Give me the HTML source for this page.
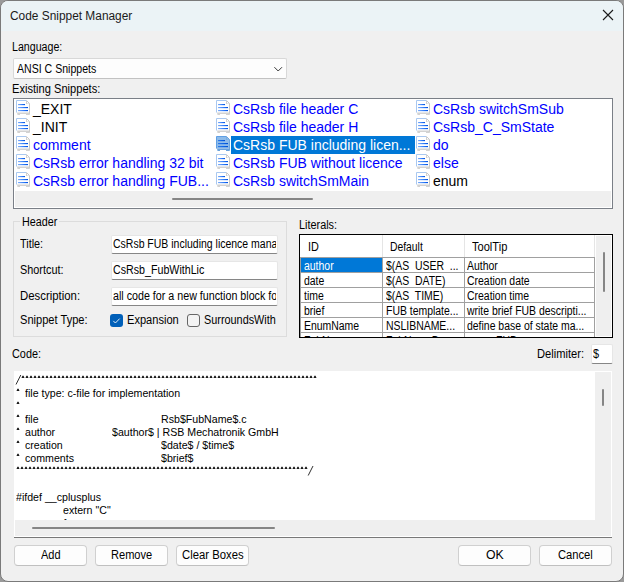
<!DOCTYPE html>
<html><head><meta charset="utf-8">
<style>
html,body{margin:0;padding:0;width:624px;height:582px;overflow:hidden;background:#9a9a9a;}
body{font-family:"Liberation Sans",sans-serif;font-size:12px;color:#000;}
#win{position:absolute;left:0;top:0;width:622px;height:580px;border:1px solid #7a7a7a;border-radius:8px;background:#f0f0f0;overflow:hidden;}
#tb{position:absolute;left:0;top:0;width:622px;height:30px;background:#ebf3f6;}
.a{position:absolute;}
.t{position:absolute;white-space:pre;transform-origin:0 0;}
.box{position:absolute;box-sizing:border-box;}
.btn{position:absolute;box-sizing:border-box;height:21px;top:545px;border:1px solid #d0d0d0;border-bottom-color:#c0c0c0;border-radius:4px;background:#fdfdfd;}
</style></head><body>
<div id="win"><div id="tb"></div></div>
<svg class="a" style="left:602px;top:9px" width="12" height="12" viewBox="0 0 12 12"><path d="M1 1L11 11M11 1L1 11" stroke="#1a1a1a" stroke-width="1.1" fill="none"/></svg>

<div class="box" style="left:13px;top:58px;width:274px;height:21px;background:#fdfdfd;border:1px solid #d8d8d8;border-bottom-color:#c2c2c2;border-radius:2px;"></div>
<svg class="a" style="left:273px;top:65px" width="11" height="8" viewBox="0 0 11 8"><path d="M1.4 2.2L5.2 6L9 2.2" stroke="#383838" stroke-width="1" fill="none"/></svg>

<div class="box" style="left:13px;top:98px;width:600px;height:111px;border:1px solid #7a7f87;background:#fff;"></div>
<div class="a" style="left:15px;top:191px;width:596px;height:16px;background:#efefef;"></div>
<div class="a" style="left:172px;top:198px;width:141px;height:2px;background:#858585;border-radius:1px;"></div>
<div class="a" style="left:16px;top:100px;line-height:0"><svg width="14" height="16" viewBox="0 0 14 16"><defs><linearGradient id="lg" x1="0" x2="1"><stop offset="0" stop-color="#82b0fa"/><stop offset="0.6" stop-color="#2a78f8"/><stop offset="1" stop-color="#0050e0"/></linearGradient></defs>
<path d="M0.5 0.5H10.5L13.5 3.5V12.5H0.5Z" fill="#fff"/>
<path d="M0.5 12.5V0.5H10.5" stroke="#a9c8f0" fill="none"/>
<path d="M10.5 0.5L13.5 3.5V14.5" stroke="#c8c8c8" fill="none"/>
<path d="M10 1H11V3.5H13.5V4H10Z" fill="#d0d0d0"/>
<rect x="2" y="4" width="7" height="1.15" fill="url(#lg)"/>
<rect x="2" y="7" width="10" height="1.15" fill="url(#lg)"/>
<rect x="2" y="10" width="10" height="1.15" fill="url(#lg)"/>
<path d="M1 12.5H13.5V15H10V14H4V15H1.5Z" fill="#d2d2d2"/>
</svg></div><div class="t" style="left:33px;top:102px;font-size:14px;line-height:14px;color:#000;">_EXIT</div><div class="a" style="left:16px;top:118px;line-height:0"><svg width="14" height="16" viewBox="0 0 14 16"><defs><linearGradient id="lg" x1="0" x2="1"><stop offset="0" stop-color="#82b0fa"/><stop offset="0.6" stop-color="#2a78f8"/><stop offset="1" stop-color="#0050e0"/></linearGradient></defs>
<path d="M0.5 0.5H10.5L13.5 3.5V12.5H0.5Z" fill="#fff"/>
<path d="M0.5 12.5V0.5H10.5" stroke="#a9c8f0" fill="none"/>
<path d="M10.5 0.5L13.5 3.5V14.5" stroke="#c8c8c8" fill="none"/>
<path d="M10 1H11V3.5H13.5V4H10Z" fill="#d0d0d0"/>
<rect x="2" y="4" width="7" height="1.15" fill="url(#lg)"/>
<rect x="2" y="7" width="10" height="1.15" fill="url(#lg)"/>
<rect x="2" y="10" width="10" height="1.15" fill="url(#lg)"/>
<path d="M1 12.5H13.5V15H10V14H4V15H1.5Z" fill="#d2d2d2"/>
</svg></div><div class="t" style="left:33px;top:120px;font-size:14px;line-height:14px;color:#000;">_INIT</div><div class="a" style="left:16px;top:136px;line-height:0"><svg width="14" height="16" viewBox="0 0 14 16"><defs><linearGradient id="lg" x1="0" x2="1"><stop offset="0" stop-color="#82b0fa"/><stop offset="0.6" stop-color="#2a78f8"/><stop offset="1" stop-color="#0050e0"/></linearGradient></defs>
<path d="M0.5 0.5H10.5L13.5 3.5V12.5H0.5Z" fill="#fff"/>
<path d="M0.5 12.5V0.5H10.5" stroke="#a9c8f0" fill="none"/>
<path d="M10.5 0.5L13.5 3.5V14.5" stroke="#c8c8c8" fill="none"/>
<path d="M10 1H11V3.5H13.5V4H10Z" fill="#d0d0d0"/>
<rect x="2" y="4" width="7" height="1.15" fill="url(#lg)"/>
<rect x="2" y="7" width="10" height="1.15" fill="url(#lg)"/>
<rect x="2" y="10" width="10" height="1.15" fill="url(#lg)"/>
<path d="M1 12.5H13.5V15H10V14H4V15H1.5Z" fill="#d2d2d2"/>
</svg></div><div class="t" style="left:33px;top:138px;font-size:14px;line-height:14px;color:#0000ff;">comment</div><div class="a" style="left:16px;top:154px;line-height:0"><svg width="14" height="16" viewBox="0 0 14 16"><defs><linearGradient id="lg" x1="0" x2="1"><stop offset="0" stop-color="#82b0fa"/><stop offset="0.6" stop-color="#2a78f8"/><stop offset="1" stop-color="#0050e0"/></linearGradient></defs>
<path d="M0.5 0.5H10.5L13.5 3.5V12.5H0.5Z" fill="#fff"/>
<path d="M0.5 12.5V0.5H10.5" stroke="#a9c8f0" fill="none"/>
<path d="M10.5 0.5L13.5 3.5V14.5" stroke="#c8c8c8" fill="none"/>
<path d="M10 1H11V3.5H13.5V4H10Z" fill="#d0d0d0"/>
<rect x="2" y="4" width="7" height="1.15" fill="url(#lg)"/>
<rect x="2" y="7" width="10" height="1.15" fill="url(#lg)"/>
<rect x="2" y="10" width="10" height="1.15" fill="url(#lg)"/>
<path d="M1 12.5H13.5V15H10V14H4V15H1.5Z" fill="#d2d2d2"/>
</svg></div><div class="t" style="left:33px;top:156px;font-size:14px;line-height:14px;color:#0000ff;">CsRsb error handling 32 bit</div><div class="a" style="left:16px;top:172px;line-height:0"><svg width="14" height="16" viewBox="0 0 14 16"><defs><linearGradient id="lg" x1="0" x2="1"><stop offset="0" stop-color="#82b0fa"/><stop offset="0.6" stop-color="#2a78f8"/><stop offset="1" stop-color="#0050e0"/></linearGradient></defs>
<path d="M0.5 0.5H10.5L13.5 3.5V12.5H0.5Z" fill="#fff"/>
<path d="M0.5 12.5V0.5H10.5" stroke="#a9c8f0" fill="none"/>
<path d="M10.5 0.5L13.5 3.5V14.5" stroke="#c8c8c8" fill="none"/>
<path d="M10 1H11V3.5H13.5V4H10Z" fill="#d0d0d0"/>
<rect x="2" y="4" width="7" height="1.15" fill="url(#lg)"/>
<rect x="2" y="7" width="10" height="1.15" fill="url(#lg)"/>
<rect x="2" y="10" width="10" height="1.15" fill="url(#lg)"/>
<path d="M1 12.5H13.5V15H10V14H4V15H1.5Z" fill="#d2d2d2"/>
</svg></div><div class="t" style="left:33px;top:174px;font-size:14px;line-height:14px;color:#0000ff;">CsRsb error handling FUB...</div><div class="a" style="left:216px;top:100px;line-height:0"><svg width="14" height="16" viewBox="0 0 14 16"><defs><linearGradient id="lg" x1="0" x2="1"><stop offset="0" stop-color="#82b0fa"/><stop offset="0.6" stop-color="#2a78f8"/><stop offset="1" stop-color="#0050e0"/></linearGradient></defs>
<path d="M0.5 0.5H10.5L13.5 3.5V12.5H0.5Z" fill="#fff"/>
<path d="M0.5 12.5V0.5H10.5" stroke="#a9c8f0" fill="none"/>
<path d="M10.5 0.5L13.5 3.5V14.5" stroke="#c8c8c8" fill="none"/>
<path d="M10 1H11V3.5H13.5V4H10Z" fill="#d0d0d0"/>
<rect x="2" y="4" width="7" height="1.15" fill="url(#lg)"/>
<rect x="2" y="7" width="10" height="1.15" fill="url(#lg)"/>
<rect x="2" y="10" width="10" height="1.15" fill="url(#lg)"/>
<path d="M1 12.5H13.5V15H10V14H4V15H1.5Z" fill="#d2d2d2"/>
</svg></div><div class="t" style="left:233px;top:102px;font-size:14px;line-height:14px;color:#0000ff;">CsRsb file header C</div><div class="a" style="left:216px;top:118px;line-height:0"><svg width="14" height="16" viewBox="0 0 14 16"><defs><linearGradient id="lg" x1="0" x2="1"><stop offset="0" stop-color="#82b0fa"/><stop offset="0.6" stop-color="#2a78f8"/><stop offset="1" stop-color="#0050e0"/></linearGradient></defs>
<path d="M0.5 0.5H10.5L13.5 3.5V12.5H0.5Z" fill="#fff"/>
<path d="M0.5 12.5V0.5H10.5" stroke="#a9c8f0" fill="none"/>
<path d="M10.5 0.5L13.5 3.5V14.5" stroke="#c8c8c8" fill="none"/>
<path d="M10 1H11V3.5H13.5V4H10Z" fill="#d0d0d0"/>
<rect x="2" y="4" width="7" height="1.15" fill="url(#lg)"/>
<rect x="2" y="7" width="10" height="1.15" fill="url(#lg)"/>
<rect x="2" y="10" width="10" height="1.15" fill="url(#lg)"/>
<path d="M1 12.5H13.5V15H10V14H4V15H1.5Z" fill="#d2d2d2"/>
</svg></div><div class="t" style="left:233px;top:120px;font-size:14px;line-height:14px;color:#0000ff;">CsRsb file header H</div><div class="a" style="left:231px;top:136px;width:184px;height:18px;background:#0078d7;"></div><div class="a" style="left:216px;top:136px;line-height:0"><svg width="14" height="16" viewBox="0 0 14 16"><defs><linearGradient id="lgs" x1="0" x2="1"><stop offset="0" stop-color="#2f7ae6"/><stop offset="0.6" stop-color="#0a62e6"/><stop offset="1" stop-color="#0050d0"/></linearGradient></defs>
<path d="M0.5 0.5H10.5L13.5 3.5V12.5H0.5Z" fill="#8dbbea"/>
<path d="M0.5 12.5V0.5H10.5" stroke="#5f9fe4" fill="none"/>
<path d="M10.5 0.5L13.5 3.5V14.5" stroke="#6ea4dc" fill="none"/>
<path d="M10 1H11V3.5H13.5V4H10Z" fill="#78aee2"/>
<rect x="2" y="4" width="7" height="1.15" fill="url(#lgs)"/>
<rect x="2" y="7" width="10" height="1.15" fill="url(#lgs)"/>
<rect x="2" y="10" width="10" height="1.15" fill="url(#lgs)"/>
<path d="M1 12.5H13.5V15H10V14H4V15H1.5Z" fill="#6aa2dc"/>
</svg></div><div class="t" style="left:233px;top:138px;font-size:14px;line-height:14px;color:#fff;">CsRsb FUB including licen...</div><div class="a" style="left:216px;top:154px;line-height:0"><svg width="14" height="16" viewBox="0 0 14 16"><defs><linearGradient id="lg" x1="0" x2="1"><stop offset="0" stop-color="#82b0fa"/><stop offset="0.6" stop-color="#2a78f8"/><stop offset="1" stop-color="#0050e0"/></linearGradient></defs>
<path d="M0.5 0.5H10.5L13.5 3.5V12.5H0.5Z" fill="#fff"/>
<path d="M0.5 12.5V0.5H10.5" stroke="#a9c8f0" fill="none"/>
<path d="M10.5 0.5L13.5 3.5V14.5" stroke="#c8c8c8" fill="none"/>
<path d="M10 1H11V3.5H13.5V4H10Z" fill="#d0d0d0"/>
<rect x="2" y="4" width="7" height="1.15" fill="url(#lg)"/>
<rect x="2" y="7" width="10" height="1.15" fill="url(#lg)"/>
<rect x="2" y="10" width="10" height="1.15" fill="url(#lg)"/>
<path d="M1 12.5H13.5V15H10V14H4V15H1.5Z" fill="#d2d2d2"/>
</svg></div><div class="t" style="left:233px;top:156px;font-size:14px;line-height:14px;color:#0000ff;">CsRsb FUB without licence</div><div class="a" style="left:216px;top:172px;line-height:0"><svg width="14" height="16" viewBox="0 0 14 16"><defs><linearGradient id="lg" x1="0" x2="1"><stop offset="0" stop-color="#82b0fa"/><stop offset="0.6" stop-color="#2a78f8"/><stop offset="1" stop-color="#0050e0"/></linearGradient></defs>
<path d="M0.5 0.5H10.5L13.5 3.5V12.5H0.5Z" fill="#fff"/>
<path d="M0.5 12.5V0.5H10.5" stroke="#a9c8f0" fill="none"/>
<path d="M10.5 0.5L13.5 3.5V14.5" stroke="#c8c8c8" fill="none"/>
<path d="M10 1H11V3.5H13.5V4H10Z" fill="#d0d0d0"/>
<rect x="2" y="4" width="7" height="1.15" fill="url(#lg)"/>
<rect x="2" y="7" width="10" height="1.15" fill="url(#lg)"/>
<rect x="2" y="10" width="10" height="1.15" fill="url(#lg)"/>
<path d="M1 12.5H13.5V15H10V14H4V15H1.5Z" fill="#d2d2d2"/>
</svg></div><div class="t" style="left:233px;top:174px;font-size:14px;line-height:14px;color:#0000ff;">CsRsb switchSmMain</div><div class="a" style="left:416px;top:100px;line-height:0"><svg width="14" height="16" viewBox="0 0 14 16"><defs><linearGradient id="lg" x1="0" x2="1"><stop offset="0" stop-color="#82b0fa"/><stop offset="0.6" stop-color="#2a78f8"/><stop offset="1" stop-color="#0050e0"/></linearGradient></defs>
<path d="M0.5 0.5H10.5L13.5 3.5V12.5H0.5Z" fill="#fff"/>
<path d="M0.5 12.5V0.5H10.5" stroke="#a9c8f0" fill="none"/>
<path d="M10.5 0.5L13.5 3.5V14.5" stroke="#c8c8c8" fill="none"/>
<path d="M10 1H11V3.5H13.5V4H10Z" fill="#d0d0d0"/>
<rect x="2" y="4" width="7" height="1.15" fill="url(#lg)"/>
<rect x="2" y="7" width="10" height="1.15" fill="url(#lg)"/>
<rect x="2" y="10" width="10" height="1.15" fill="url(#lg)"/>
<path d="M1 12.5H13.5V15H10V14H4V15H1.5Z" fill="#d2d2d2"/>
</svg></div><div class="t" style="left:433px;top:102px;font-size:14px;line-height:14px;color:#0000ff;">CsRsb switchSmSub</div><div class="a" style="left:416px;top:118px;line-height:0"><svg width="14" height="16" viewBox="0 0 14 16"><defs><linearGradient id="lg" x1="0" x2="1"><stop offset="0" stop-color="#82b0fa"/><stop offset="0.6" stop-color="#2a78f8"/><stop offset="1" stop-color="#0050e0"/></linearGradient></defs>
<path d="M0.5 0.5H10.5L13.5 3.5V12.5H0.5Z" fill="#fff"/>
<path d="M0.5 12.5V0.5H10.5" stroke="#a9c8f0" fill="none"/>
<path d="M10.5 0.5L13.5 3.5V14.5" stroke="#c8c8c8" fill="none"/>
<path d="M10 1H11V3.5H13.5V4H10Z" fill="#d0d0d0"/>
<rect x="2" y="4" width="7" height="1.15" fill="url(#lg)"/>
<rect x="2" y="7" width="10" height="1.15" fill="url(#lg)"/>
<rect x="2" y="10" width="10" height="1.15" fill="url(#lg)"/>
<path d="M1 12.5H13.5V15H10V14H4V15H1.5Z" fill="#d2d2d2"/>
</svg></div><div class="t" style="left:433px;top:120px;font-size:14px;line-height:14px;color:#0000ff;">CsRsb_C_SmState</div><div class="a" style="left:416px;top:136px;line-height:0"><svg width="14" height="16" viewBox="0 0 14 16"><defs><linearGradient id="lg" x1="0" x2="1"><stop offset="0" stop-color="#82b0fa"/><stop offset="0.6" stop-color="#2a78f8"/><stop offset="1" stop-color="#0050e0"/></linearGradient></defs>
<path d="M0.5 0.5H10.5L13.5 3.5V12.5H0.5Z" fill="#fff"/>
<path d="M0.5 12.5V0.5H10.5" stroke="#a9c8f0" fill="none"/>
<path d="M10.5 0.5L13.5 3.5V14.5" stroke="#c8c8c8" fill="none"/>
<path d="M10 1H11V3.5H13.5V4H10Z" fill="#d0d0d0"/>
<rect x="2" y="4" width="7" height="1.15" fill="url(#lg)"/>
<rect x="2" y="7" width="10" height="1.15" fill="url(#lg)"/>
<rect x="2" y="10" width="10" height="1.15" fill="url(#lg)"/>
<path d="M1 12.5H13.5V15H10V14H4V15H1.5Z" fill="#d2d2d2"/>
</svg></div><div class="t" style="left:433px;top:138px;font-size:14px;line-height:14px;color:#0000ff;">do</div><div class="a" style="left:416px;top:154px;line-height:0"><svg width="14" height="16" viewBox="0 0 14 16"><defs><linearGradient id="lg" x1="0" x2="1"><stop offset="0" stop-color="#82b0fa"/><stop offset="0.6" stop-color="#2a78f8"/><stop offset="1" stop-color="#0050e0"/></linearGradient></defs>
<path d="M0.5 0.5H10.5L13.5 3.5V12.5H0.5Z" fill="#fff"/>
<path d="M0.5 12.5V0.5H10.5" stroke="#a9c8f0" fill="none"/>
<path d="M10.5 0.5L13.5 3.5V14.5" stroke="#c8c8c8" fill="none"/>
<path d="M10 1H11V3.5H13.5V4H10Z" fill="#d0d0d0"/>
<rect x="2" y="4" width="7" height="1.15" fill="url(#lg)"/>
<rect x="2" y="7" width="10" height="1.15" fill="url(#lg)"/>
<rect x="2" y="10" width="10" height="1.15" fill="url(#lg)"/>
<path d="M1 12.5H13.5V15H10V14H4V15H1.5Z" fill="#d2d2d2"/>
</svg></div><div class="t" style="left:433px;top:156px;font-size:14px;line-height:14px;color:#0000ff;">else</div><div class="a" style="left:416px;top:172px;line-height:0"><svg width="14" height="16" viewBox="0 0 14 16"><defs><linearGradient id="lg" x1="0" x2="1"><stop offset="0" stop-color="#82b0fa"/><stop offset="0.6" stop-color="#2a78f8"/><stop offset="1" stop-color="#0050e0"/></linearGradient></defs>
<path d="M0.5 0.5H10.5L13.5 3.5V12.5H0.5Z" fill="#fff"/>
<path d="M0.5 12.5V0.5H10.5" stroke="#a9c8f0" fill="none"/>
<path d="M10.5 0.5L13.5 3.5V14.5" stroke="#c8c8c8" fill="none"/>
<path d="M10 1H11V3.5H13.5V4H10Z" fill="#d0d0d0"/>
<rect x="2" y="4" width="7" height="1.15" fill="url(#lg)"/>
<rect x="2" y="7" width="10" height="1.15" fill="url(#lg)"/>
<rect x="2" y="10" width="10" height="1.15" fill="url(#lg)"/>
<path d="M1 12.5H13.5V15H10V14H4V15H1.5Z" fill="#d2d2d2"/>
</svg></div><div class="t" style="left:433px;top:174px;font-size:14px;line-height:14px;color:#000;">enum</div>

<div class="box" style="left:13px;top:221px;width:274px;height:116px;border:1px solid #dcdcdc;"></div>
<div class="a" style="left:20px;top:215px;width:39px;height:12px;background:#f0f0f0;"></div>

<div class="box" style="left:111px;top:235px;width:167px;height:19px;background:#fff;border:1px solid #e6e6e6;border-bottom-color:#868686;border-radius:2px;"></div>
<div class="box" style="left:111px;top:261px;width:167px;height:19px;background:#fff;border:1px solid #e6e6e6;border-bottom-color:#868686;border-radius:2px;"></div>
<div class="box" style="left:111px;top:287px;width:167px;height:19px;background:#fff;border:1px solid #e6e6e6;border-bottom-color:#868686;border-radius:2px;"></div>

<div class="box" style="left:110px;top:314px;width:13px;height:13px;background:#005fb8;border-radius:3px;"></div>
<svg class="a" style="left:110px;top:314px" width="13" height="13" viewBox="0 0 13 13"><path d="M3.3 6.9L5.4 9L9.7 4.6" stroke="#f4f8fc" stroke-width="0.9" fill="none"/></svg>
<div class="box" style="left:187px;top:314px;width:13px;height:13px;background:#f3f3f3;border:1px solid #666;border-radius:3px;"></div>

<div class="box" style="left:299px;top:234px;width:314px;height:104px;border:1px solid #000;background:#fff;"></div>
<div class="a" style="left:382px;top:235px;width:1px;height:22px;background:#e5e5e5;"></div><div class="a" style="left:464px;top:235px;width:1px;height:22px;background:#e5e5e5;"></div><div class="a" style="left:594px;top:235px;width:1px;height:22px;background:#e5e5e5;"></div><div class="a" style="left:596px;top:236px;width:15px;height:100px;background:#efefef;"></div><div class="a" style="left:603px;top:252px;width:2px;height:40px;background:#858585;border-radius:1px;"></div><div class="a" style="left:300px;top:257px;width:295px;height:1px;background:#a0a0a0;"></div><div class="a" style="left:300px;top:272px;width:295px;height:1px;background:#a0a0a0;"></div><div class="a" style="left:300px;top:287px;width:295px;height:1px;background:#a0a0a0;"></div><div class="a" style="left:300px;top:302px;width:295px;height:1px;background:#a0a0a0;"></div><div class="a" style="left:300px;top:317px;width:295px;height:1px;background:#a0a0a0;"></div><div class="a" style="left:300px;top:332px;width:295px;height:1px;background:#a0a0a0;"></div><div class="a" style="left:300px;top:257px;width:1px;height:80px;background:#a0a0a0;"></div><div class="a" style="left:382px;top:257px;width:1px;height:80px;background:#a0a0a0;"></div><div class="a" style="left:464px;top:257px;width:1px;height:80px;background:#a0a0a0;"></div><div class="a" style="left:594px;top:257px;width:1px;height:80px;background:#a0a0a0;"></div><div class="a" style="left:301px;top:258px;width:81px;height:14px;background:#0078d7;"></div><div class="a" style="left:301px;top:258px;width:81px;height:79px;overflow:hidden;"><div class="t" style="left:2.50px;top:2px;font-size:12px;line-height:12px;color:#fff;transform:scaleX(0.87);">author</div></div><div class="a" style="left:383px;top:258px;width:81px;height:79px;overflow:hidden;"><div class="t" style="left:2.90px;top:2px;font-size:12px;line-height:12px;color:#000;transform:scaleX(0.87);">$(AS  USER  ...</div></div><div class="a" style="left:465px;top:258px;width:129px;height:79px;overflow:hidden;"><div class="t" style="left:2.10px;top:2px;font-size:12px;line-height:12px;color:#000;transform:scaleX(0.87);">Author</div></div><div class="a" style="left:301px;top:258px;width:81px;height:79px;overflow:hidden;"><div class="t" style="left:2.50px;top:17px;font-size:12px;line-height:12px;color:#000;transform:scaleX(0.87);">date</div></div><div class="a" style="left:383px;top:258px;width:81px;height:79px;overflow:hidden;"><div class="t" style="left:2.90px;top:17px;font-size:12px;line-height:12px;color:#000;transform:scaleX(0.87);">$(AS  DATE)</div></div><div class="a" style="left:465px;top:258px;width:129px;height:79px;overflow:hidden;"><div class="t" style="left:2.10px;top:17px;font-size:12px;line-height:12px;color:#000;transform:scaleX(0.87);">Creation date</div></div><div class="a" style="left:301px;top:258px;width:81px;height:79px;overflow:hidden;"><div class="t" style="left:2.50px;top:32px;font-size:12px;line-height:12px;color:#000;transform:scaleX(0.87);">time</div></div><div class="a" style="left:383px;top:258px;width:81px;height:79px;overflow:hidden;"><div class="t" style="left:2.90px;top:32px;font-size:12px;line-height:12px;color:#000;transform:scaleX(0.87);">$(AS  TIME)</div></div><div class="a" style="left:465px;top:258px;width:129px;height:79px;overflow:hidden;"><div class="t" style="left:2.10px;top:32px;font-size:12px;line-height:12px;color:#000;transform:scaleX(0.87);">Creation time</div></div><div class="a" style="left:301px;top:258px;width:81px;height:79px;overflow:hidden;"><div class="t" style="left:2.50px;top:47px;font-size:12px;line-height:12px;color:#000;transform:scaleX(0.87);">brief</div></div><div class="a" style="left:383px;top:258px;width:81px;height:79px;overflow:hidden;"><div class="t" style="left:2.90px;top:47px;font-size:12px;line-height:12px;color:#000;transform:scaleX(0.87);">FUB template...</div></div><div class="a" style="left:465px;top:258px;width:129px;height:79px;overflow:hidden;"><div class="t" style="left:2.10px;top:47px;font-size:12px;line-height:12px;color:#000;transform:scaleX(0.87);">write brief FUB descripti...</div></div><div class="a" style="left:301px;top:258px;width:81px;height:79px;overflow:hidden;"><div class="t" style="left:2.50px;top:62px;font-size:12px;line-height:12px;color:#000;transform:scaleX(0.87);">EnumName</div></div><div class="a" style="left:383px;top:258px;width:81px;height:79px;overflow:hidden;"><div class="t" style="left:2.90px;top:62px;font-size:12px;line-height:12px;color:#000;transform:scaleX(0.87);">NSLIBNAME...</div></div><div class="a" style="left:465px;top:258px;width:129px;height:79px;overflow:hidden;"><div class="t" style="left:2.10px;top:62px;font-size:12px;line-height:12px;color:#000;transform:scaleX(0.87);">define base of state ma...</div></div><div class="a" style="left:301px;top:258px;width:81px;height:79px;overflow:hidden;"><div class="t" style="left:2.50px;top:77px;font-size:12px;line-height:12px;color:#000;transform:scaleX(0.87);">FubName</div></div><div class="a" style="left:383px;top:258px;width:81px;height:79px;overflow:hidden;"><div class="t" style="left:2.90px;top:77px;font-size:12px;line-height:12px;color:#000;transform:scaleX(0.87);">FubNameDe...</div></div><div class="a" style="left:465px;top:258px;width:129px;height:79px;overflow:hidden;"><div class="t" style="left:2.10px;top:77px;font-size:12px;line-height:12px;color:#000;transform:scaleX(0.87);">name FUB</div></div>

<div class="box" style="left:591px;top:344px;width:22px;height:20px;background:#fff;border:1px solid #e6e6e6;border-bottom-color:#868686;border-radius:2px;"></div>

<div class="a" style="left:14px;top:371px;width:598px;height:166px;background:#fff;overflow:hidden;"><svg class="a" style="left:0;top:0" width="598" height="166"><path d="M2 13.5L6.800000000000001 4" stroke="#1a1a1a" stroke-width="0.9"/></svg><svg class="a" style="left:0;top:0" width="598" height="166" fill="#1a1a1a"><path d="M7.50 7.00L8.40 4.80L9.60 4.80L10.50 7.00Z"/><path d="M11.50 7.00L12.40 4.80L13.60 4.80L14.50 7.00Z"/><path d="M15.50 7.00L16.40 4.80L17.60 4.80L18.50 7.00Z"/><path d="M19.50 7.00L20.40 4.80L21.60 4.80L22.50 7.00Z"/><path d="M23.50 7.00L24.40 4.80L25.60 4.80L26.50 7.00Z"/><path d="M27.50 7.00L28.40 4.80L29.60 4.80L30.50 7.00Z"/><path d="M31.50 7.00L32.40 4.80L33.60 4.80L34.50 7.00Z"/><path d="M35.50 7.00L36.40 4.80L37.60 4.80L38.50 7.00Z"/><path d="M39.50 7.00L40.40 4.80L41.60 4.80L42.50 7.00Z"/><path d="M43.50 7.00L44.40 4.80L45.60 4.80L46.50 7.00Z"/><path d="M47.50 7.00L48.40 4.80L49.60 4.80L50.50 7.00Z"/><path d="M51.50 7.00L52.40 4.80L53.60 4.80L54.50 7.00Z"/><path d="M55.50 7.00L56.40 4.80L57.60 4.80L58.50 7.00Z"/><path d="M59.50 7.00L60.40 4.80L61.60 4.80L62.50 7.00Z"/><path d="M63.50 7.00L64.40 4.80L65.60 4.80L66.50 7.00Z"/><path d="M67.50 7.00L68.40 4.80L69.60 4.80L70.50 7.00Z"/><path d="M71.50 7.00L72.40 4.80L73.60 4.80L74.50 7.00Z"/><path d="M75.50 7.00L76.40 4.80L77.60 4.80L78.50 7.00Z"/><path d="M79.50 7.00L80.40 4.80L81.60 4.80L82.50 7.00Z"/><path d="M83.50 7.00L84.40 4.80L85.60 4.80L86.50 7.00Z"/><path d="M87.50 7.00L88.40 4.80L89.60 4.80L90.50 7.00Z"/><path d="M91.50 7.00L92.40 4.80L93.60 4.80L94.50 7.00Z"/><path d="M95.50 7.00L96.40 4.80L97.60 4.80L98.50 7.00Z"/><path d="M99.50 7.00L100.40 4.80L101.60 4.80L102.50 7.00Z"/><path d="M103.50 7.00L104.40 4.80L105.60 4.80L106.50 7.00Z"/><path d="M107.50 7.00L108.40 4.80L109.60 4.80L110.50 7.00Z"/><path d="M111.50 7.00L112.40 4.80L113.60 4.80L114.50 7.00Z"/><path d="M115.50 7.00L116.40 4.80L117.60 4.80L118.50 7.00Z"/><path d="M119.50 7.00L120.40 4.80L121.60 4.80L122.50 7.00Z"/><path d="M123.50 7.00L124.40 4.80L125.60 4.80L126.50 7.00Z"/><path d="M127.50 7.00L128.40 4.80L129.60 4.80L130.50 7.00Z"/><path d="M131.50 7.00L132.40 4.80L133.60 4.80L134.50 7.00Z"/><path d="M135.50 7.00L136.40 4.80L137.60 4.80L138.50 7.00Z"/><path d="M139.50 7.00L140.40 4.80L141.60 4.80L142.50 7.00Z"/><path d="M143.50 7.00L144.40 4.80L145.60 4.80L146.50 7.00Z"/><path d="M147.50 7.00L148.40 4.80L149.60 4.80L150.50 7.00Z"/><path d="M151.50 7.00L152.40 4.80L153.60 4.80L154.50 7.00Z"/><path d="M155.50 7.00L156.40 4.80L157.60 4.80L158.50 7.00Z"/><path d="M159.50 7.00L160.40 4.80L161.60 4.80L162.50 7.00Z"/><path d="M163.50 7.00L164.40 4.80L165.60 4.80L166.50 7.00Z"/><path d="M167.50 7.00L168.40 4.80L169.60 4.80L170.50 7.00Z"/><path d="M171.50 7.00L172.40 4.80L173.60 4.80L174.50 7.00Z"/><path d="M175.50 7.00L176.40 4.80L177.60 4.80L178.50 7.00Z"/><path d="M179.50 7.00L180.40 4.80L181.60 4.80L182.50 7.00Z"/><path d="M183.50 7.00L184.40 4.80L185.60 4.80L186.50 7.00Z"/><path d="M187.50 7.00L188.40 4.80L189.60 4.80L190.50 7.00Z"/><path d="M191.50 7.00L192.40 4.80L193.60 4.80L194.50 7.00Z"/><path d="M195.50 7.00L196.40 4.80L197.60 4.80L198.50 7.00Z"/><path d="M199.50 7.00L200.40 4.80L201.60 4.80L202.50 7.00Z"/><path d="M203.50 7.00L204.40 4.80L205.60 4.80L206.50 7.00Z"/><path d="M207.50 7.00L208.40 4.80L209.60 4.80L210.50 7.00Z"/><path d="M211.50 7.00L212.40 4.80L213.60 4.80L214.50 7.00Z"/><path d="M215.50 7.00L216.40 4.80L217.60 4.80L218.50 7.00Z"/><path d="M219.50 7.00L220.40 4.80L221.60 4.80L222.50 7.00Z"/><path d="M223.50 7.00L224.40 4.80L225.60 4.80L226.50 7.00Z"/><path d="M227.50 7.00L228.40 4.80L229.60 4.80L230.50 7.00Z"/><path d="M231.50 7.00L232.40 4.80L233.60 4.80L234.50 7.00Z"/><path d="M235.50 7.00L236.40 4.80L237.60 4.80L238.50 7.00Z"/><path d="M239.50 7.00L240.40 4.80L241.60 4.80L242.50 7.00Z"/><path d="M243.50 7.00L244.40 4.80L245.60 4.80L246.50 7.00Z"/><path d="M247.50 7.00L248.40 4.80L249.60 4.80L250.50 7.00Z"/><path d="M251.50 7.00L252.40 4.80L253.60 4.80L254.50 7.00Z"/><path d="M255.50 7.00L256.40 4.80L257.60 4.80L258.50 7.00Z"/><path d="M259.50 7.00L260.40 4.80L261.60 4.80L262.50 7.00Z"/><path d="M263.50 7.00L264.40 4.80L265.60 4.80L266.50 7.00Z"/><path d="M267.50 7.00L268.40 4.80L269.60 4.80L270.50 7.00Z"/><path d="M271.50 7.00L272.40 4.80L273.60 4.80L274.50 7.00Z"/><path d="M275.50 7.00L276.40 4.80L277.60 4.80L278.50 7.00Z"/><path d="M279.50 7.00L280.40 4.80L281.60 4.80L282.50 7.00Z"/><path d="M283.50 7.00L284.40 4.80L285.60 4.80L286.50 7.00Z"/><path d="M287.50 7.00L288.40 4.80L289.60 4.80L290.50 7.00Z"/><path d="M291.50 7.00L292.40 4.80L293.60 4.80L294.50 7.00Z"/><path d="M295.50 7.00L296.40 4.80L297.60 4.80L298.50 7.00Z"/><path d="M299.50 7.00L300.40 4.80L301.60 4.80L302.50 7.00Z"/></svg><svg class="a" style="left:0;top:0" width="598" height="166" fill="#1a1a1a"><path d="M2.50 20.00L3.40 17.80L4.60 17.80L5.50 20.00Z"/></svg><div class="t" style="left:10.50px;top:17px;font-size:11px;line-height:11px;transform:scaleX(0.965);">file type: c-file for implementation</div><svg class="a" style="left:0;top:0" width="598" height="166" fill="#1a1a1a"><path d="M2.50 33.00L3.40 30.80L4.60 30.80L5.50 33.00Z"/></svg><svg class="a" style="left:0;top:0" width="598" height="166" fill="#1a1a1a"><path d="M2.50 46.00L3.40 43.80L4.60 43.80L5.50 46.00Z"/></svg><div class="t" style="left:10.50px;top:43px;font-size:11px;line-height:11px;transform:scaleX(0.965);">file</div><div class="t" style="left:146.90px;top:43px;font-size:11px;line-height:11px;transform:scaleX(0.965);">Rsb$FubName$.c</div><svg class="a" style="left:0;top:0" width="598" height="166" fill="#1a1a1a"><path d="M2.50 59.00L3.40 56.80L4.60 56.80L5.50 59.00Z"/></svg><div class="t" style="left:10.50px;top:56px;font-size:11px;line-height:11px;transform:scaleX(0.965);">author</div><div class="t" style="left:97.70px;top:56px;font-size:11px;line-height:11px;transform:scaleX(0.965);">$author$ | RSB Mechatronik GmbH</div><svg class="a" style="left:0;top:0" width="598" height="166" fill="#1a1a1a"><path d="M2.50 72.00L3.40 69.80L4.60 69.80L5.50 72.00Z"/></svg><div class="t" style="left:10.50px;top:69px;font-size:11px;line-height:11px;transform:scaleX(0.965);">creation</div><div class="t" style="left:146.90px;top:69px;font-size:11px;line-height:11px;transform:scaleX(0.965);">$date$ / $time$</div><svg class="a" style="left:0;top:0" width="598" height="166" fill="#1a1a1a"><path d="M2.50 85.00L3.40 82.80L4.60 82.80L5.50 85.00Z"/></svg><div class="t" style="left:10.50px;top:82px;font-size:11px;line-height:11px;transform:scaleX(0.965);">comments</div><div class="t" style="left:146.90px;top:82px;font-size:11px;line-height:11px;transform:scaleX(0.965);">$brief$</div><svg class="a" style="left:0;top:0" width="598" height="166" fill="#1a1a1a"><path d="M2.50 98.00L3.40 95.80L4.60 95.80L5.50 98.00Z"/><path d="M6.50 98.00L7.40 95.80L8.60 95.80L9.50 98.00Z"/><path d="M10.50 98.00L11.40 95.80L12.60 95.80L13.50 98.00Z"/><path d="M14.50 98.00L15.40 95.80L16.60 95.80L17.50 98.00Z"/><path d="M18.50 98.00L19.40 95.80L20.60 95.80L21.50 98.00Z"/><path d="M22.50 98.00L23.40 95.80L24.60 95.80L25.50 98.00Z"/><path d="M26.50 98.00L27.40 95.80L28.60 95.80L29.50 98.00Z"/><path d="M30.50 98.00L31.40 95.80L32.60 95.80L33.50 98.00Z"/><path d="M34.50 98.00L35.40 95.80L36.60 95.80L37.50 98.00Z"/><path d="M38.50 98.00L39.40 95.80L40.60 95.80L41.50 98.00Z"/><path d="M42.50 98.00L43.40 95.80L44.60 95.80L45.50 98.00Z"/><path d="M46.50 98.00L47.40 95.80L48.60 95.80L49.50 98.00Z"/><path d="M50.50 98.00L51.40 95.80L52.60 95.80L53.50 98.00Z"/><path d="M54.50 98.00L55.40 95.80L56.60 95.80L57.50 98.00Z"/><path d="M58.50 98.00L59.40 95.80L60.60 95.80L61.50 98.00Z"/><path d="M62.50 98.00L63.40 95.80L64.60 95.80L65.50 98.00Z"/><path d="M66.50 98.00L67.40 95.80L68.60 95.80L69.50 98.00Z"/><path d="M70.50 98.00L71.40 95.80L72.60 95.80L73.50 98.00Z"/><path d="M74.50 98.00L75.40 95.80L76.60 95.80L77.50 98.00Z"/><path d="M78.50 98.00L79.40 95.80L80.60 95.80L81.50 98.00Z"/><path d="M82.50 98.00L83.40 95.80L84.60 95.80L85.50 98.00Z"/><path d="M86.50 98.00L87.40 95.80L88.60 95.80L89.50 98.00Z"/><path d="M90.50 98.00L91.40 95.80L92.60 95.80L93.50 98.00Z"/><path d="M94.50 98.00L95.40 95.80L96.60 95.80L97.50 98.00Z"/><path d="M98.50 98.00L99.40 95.80L100.60 95.80L101.50 98.00Z"/><path d="M102.50 98.00L103.40 95.80L104.60 95.80L105.50 98.00Z"/><path d="M106.50 98.00L107.40 95.80L108.60 95.80L109.50 98.00Z"/><path d="M110.50 98.00L111.40 95.80L112.60 95.80L113.50 98.00Z"/><path d="M114.50 98.00L115.40 95.80L116.60 95.80L117.50 98.00Z"/><path d="M118.50 98.00L119.40 95.80L120.60 95.80L121.50 98.00Z"/><path d="M122.50 98.00L123.40 95.80L124.60 95.80L125.50 98.00Z"/><path d="M126.50 98.00L127.40 95.80L128.60 95.80L129.50 98.00Z"/><path d="M130.50 98.00L131.40 95.80L132.60 95.80L133.50 98.00Z"/><path d="M134.50 98.00L135.40 95.80L136.60 95.80L137.50 98.00Z"/><path d="M138.50 98.00L139.40 95.80L140.60 95.80L141.50 98.00Z"/><path d="M142.50 98.00L143.40 95.80L144.60 95.80L145.50 98.00Z"/><path d="M146.50 98.00L147.40 95.80L148.60 95.80L149.50 98.00Z"/><path d="M150.50 98.00L151.40 95.80L152.60 95.80L153.50 98.00Z"/><path d="M154.50 98.00L155.40 95.80L156.60 95.80L157.50 98.00Z"/><path d="M158.50 98.00L159.40 95.80L160.60 95.80L161.50 98.00Z"/><path d="M162.50 98.00L163.40 95.80L164.60 95.80L165.50 98.00Z"/><path d="M166.50 98.00L167.40 95.80L168.60 95.80L169.50 98.00Z"/><path d="M170.50 98.00L171.40 95.80L172.60 95.80L173.50 98.00Z"/><path d="M174.50 98.00L175.40 95.80L176.60 95.80L177.50 98.00Z"/><path d="M178.50 98.00L179.40 95.80L180.60 95.80L181.50 98.00Z"/><path d="M182.50 98.00L183.40 95.80L184.60 95.80L185.50 98.00Z"/><path d="M186.50 98.00L187.40 95.80L188.60 95.80L189.50 98.00Z"/><path d="M190.50 98.00L191.40 95.80L192.60 95.80L193.50 98.00Z"/><path d="M194.50 98.00L195.40 95.80L196.60 95.80L197.50 98.00Z"/><path d="M198.50 98.00L199.40 95.80L200.60 95.80L201.50 98.00Z"/><path d="M202.50 98.00L203.40 95.80L204.60 95.80L205.50 98.00Z"/><path d="M206.50 98.00L207.40 95.80L208.60 95.80L209.50 98.00Z"/><path d="M210.50 98.00L211.40 95.80L212.60 95.80L213.50 98.00Z"/><path d="M214.50 98.00L215.40 95.80L216.60 95.80L217.50 98.00Z"/><path d="M218.50 98.00L219.40 95.80L220.60 95.80L221.50 98.00Z"/><path d="M222.50 98.00L223.40 95.80L224.60 95.80L225.50 98.00Z"/><path d="M226.50 98.00L227.40 95.80L228.60 95.80L229.50 98.00Z"/><path d="M230.50 98.00L231.40 95.80L232.60 95.80L233.50 98.00Z"/><path d="M234.50 98.00L235.40 95.80L236.60 95.80L237.50 98.00Z"/><path d="M238.50 98.00L239.40 95.80L240.60 95.80L241.50 98.00Z"/><path d="M242.50 98.00L243.40 95.80L244.60 95.80L245.50 98.00Z"/><path d="M246.50 98.00L247.40 95.80L248.60 95.80L249.50 98.00Z"/><path d="M250.50 98.00L251.40 95.80L252.60 95.80L253.50 98.00Z"/><path d="M254.50 98.00L255.40 95.80L256.60 95.80L257.50 98.00Z"/><path d="M258.50 98.00L259.40 95.80L260.60 95.80L261.50 98.00Z"/><path d="M262.50 98.00L263.40 95.80L264.60 95.80L265.50 98.00Z"/><path d="M266.50 98.00L267.40 95.80L268.60 95.80L269.50 98.00Z"/><path d="M270.50 98.00L271.40 95.80L272.60 95.80L273.50 98.00Z"/><path d="M274.50 98.00L275.40 95.80L276.60 95.80L277.50 98.00Z"/><path d="M278.50 98.00L279.40 95.80L280.60 95.80L281.50 98.00Z"/><path d="M282.50 98.00L283.40 95.80L284.60 95.80L285.50 98.00Z"/><path d="M286.50 98.00L287.40 95.80L288.60 95.80L289.50 98.00Z"/><path d="M290.50 98.00L291.40 95.80L292.60 95.80L293.50 98.00Z"/></svg><svg class="a" style="left:0;top:0" width="598" height="166"><path d="M294.2 104.5L299 95" stroke="#1a1a1a" stroke-width="0.9"/></svg><div class="t" style="left:1.75px;top:121px;font-size:11px;line-height:11px;transform:scaleX(0.965);">#ifdef __cplusplus</div><div class="t" style="left:49.00px;top:134px;font-size:11px;line-height:11px;transform:scaleX(0.965);">extern &quot;C&quot;</div><div class="t" style="left:49.00px;top:147px;font-size:11px;line-height:11px;transform:scaleX(0.965);">{</div></div>
<div class="a" style="left:14px;top:537px;width:598px;height:1px;background:#787878;"></div>
<div class="a" style="left:595px;top:372px;width:16px;height:164px;background:#efefef;"></div>
<div class="a" style="left:15px;top:520px;width:596px;height:16px;background:#efefef;"></div>
<div class="a" style="left:602px;top:389px;width:2px;height:17px;background:#858585;border-radius:1px;"></div>
<div class="a" style="left:32px;top:527px;width:243px;height:2px;background:#858585;border-radius:1px;"></div>

<div class="btn" style="left:14px;width:73px;"></div>
<div class="btn" style="left:95px;width:73px;"></div>
<div class="btn" style="left:176px;width:73px;"></div>
<div class="btn" style="left:458px;width:73px;"></div>
<div class="btn" style="left:539px;width:73px;"></div>
<div class="a" style="left:9.50px;top:10px;"><div class="t" style="left:0;top:0;font-size:12px;line-height:12px;color:#1a1a1a;transform:scaleX(0.9909);">Code Snippet Manager</div></div><div class="a" style="left:11.50px;top:41px;"><div class="t" style="left:0;top:0;font-size:12px;line-height:12px;color:#000;transform:scaleX(0.8866);">Language:</div></div><div class="a" style="left:16.50px;top:63px;"><div class="t" style="left:0;top:0;font-size:12px;line-height:12px;color:#000;transform:scaleX(0.8807);">ANSI C Snippets</div></div><div class="a" style="left:12.00px;top:83px;"><div class="t" style="left:0;top:0;font-size:12px;line-height:12px;color:#000;transform:scaleX(0.9257);">Existing Snippets:</div></div><div class="a" style="left:21.50px;top:216px;"><div class="t" style="left:0;top:0;font-size:12px;line-height:12px;color:#000;transform:scaleX(0.8969);">Header</div></div><div class="a" style="left:19.50px;top:238px;"><div class="t" style="left:0;top:0;font-size:12px;line-height:12px;color:#000;transform:scaleX(0.9050);">Title:</div></div><div class="a" style="left:19.50px;top:264px;"><div class="t" style="left:0;top:0;font-size:12px;line-height:12px;color:#000;transform:scaleX(0.9050);">Shortcut:</div></div><div class="a" style="left:19.90px;top:290px;"><div class="t" style="left:0;top:0;font-size:12px;line-height:12px;color:#000;transform:scaleX(0.9486);">Description:</div></div><div class="a" style="left:19.90px;top:314px;"><div class="t" style="left:0;top:0;font-size:12px;line-height:12px;color:#000;transform:scaleX(0.9239);">Snippet Type:</div></div><div class="a" style="left:126.90px;top:314px;"><div class="t" style="left:0;top:0;font-size:12px;line-height:12px;color:#000;transform:scaleX(0.9242);">Expansion</div></div><div class="a" style="left:204px;top:312px;width:72.5px;height:18px;overflow:hidden;"><div class="a" style="left:-0.20px;top:2px;"><div class="t" style="left:0;top:0;font-size:12px;line-height:12px;color:#000;transform:scaleX(0.9050);">SurroundsWith</div></div></div><div class="a" style="left:298.50px;top:219px;"><div class="t" style="left:0;top:0;font-size:12px;line-height:12px;color:#000;transform:scaleX(0.9050);">Literals:</div></div><div class="a" style="left:12.00px;top:348px;"><div class="t" style="left:0;top:0;font-size:12px;line-height:12px;color:#000;transform:scaleX(0.9050);">Code:</div></div><div class="a" style="left:537.30px;top:348px;"><div class="t" style="left:0;top:0;font-size:12px;line-height:12px;color:#000;transform:scaleX(0.9275);">Delimiter:</div></div><div class="a" style="left:592.50px;top:348px;"><div class="t" style="left:0;top:0;font-size:12px;line-height:12px;color:#000;transform:scaleX(0.9050);">$</div></div><div class="a" style="left:112px;top:236px;width:164px;height:18px;overflow:hidden;"><div class="a" style="left:0.50px;top:2px;"><div class="t" style="left:0;top:0;font-size:12px;line-height:12px;color:#000;transform:scaleX(0.8737);">CsRsb FUB including licence management</div></div></div><div class="a" style="left:112px;top:262px;width:164px;height:18px;overflow:hidden;"><div class="a" style="left:0.50px;top:2px;"><div class="t" style="left:0;top:0;font-size:12px;line-height:12px;color:#000;transform:scaleX(0.8890);">CsRsb_FubWithLic</div></div></div><div class="a" style="left:112px;top:288px;width:164px;height:18px;overflow:hidden;"><div class="a" style="left:0.50px;top:2px;"><div class="t" style="left:0;top:0;font-size:12px;line-height:12px;color:#000;transform:scaleX(0.8920);">all code for a new function block for</div></div></div><div class="a" style="left:40.70px;top:549px;"><div class="t" style="left:0;top:0;font-size:12px;line-height:12px;color:#000;transform:scaleX(0.9176);">Add</div></div><div class="a" style="left:110.90px;top:549px;"><div class="t" style="left:0;top:0;font-size:12px;line-height:12px;color:#000;transform:scaleX(0.9220);">Remove</div></div><div class="a" style="left:181.70px;top:549px;"><div class="t" style="left:0;top:0;font-size:12px;line-height:12px;color:#000;transform:scaleX(0.9423);">Clear Boxes</div></div><div class="a" style="left:485.65px;top:549px;"><div class="t" style="left:0;top:0;font-size:12px;line-height:12px;color:#000;transform:scaleX(1.0205);">OK</div></div><div class="a" style="left:558.10px;top:549px;"><div class="t" style="left:0;top:0;font-size:12px;line-height:12px;color:#000;transform:scaleX(0.9315);">Cancel</div></div><div class="a" style="left:307.50px;top:241px;"><div class="t" style="left:0;top:0;font-size:12px;line-height:12px;color:#000;transform:scaleX(0.9050);">ID</div></div><div class="a" style="left:390.10px;top:241px;"><div class="t" style="left:0;top:0;font-size:12px;line-height:12px;color:#000;transform:scaleX(0.8624);">Default</div></div><div class="a" style="left:471.50px;top:241px;"><div class="t" style="left:0;top:0;font-size:12px;line-height:12px;color:#000;transform:scaleX(0.9229);">ToolTip</div></div>
</body></html>
